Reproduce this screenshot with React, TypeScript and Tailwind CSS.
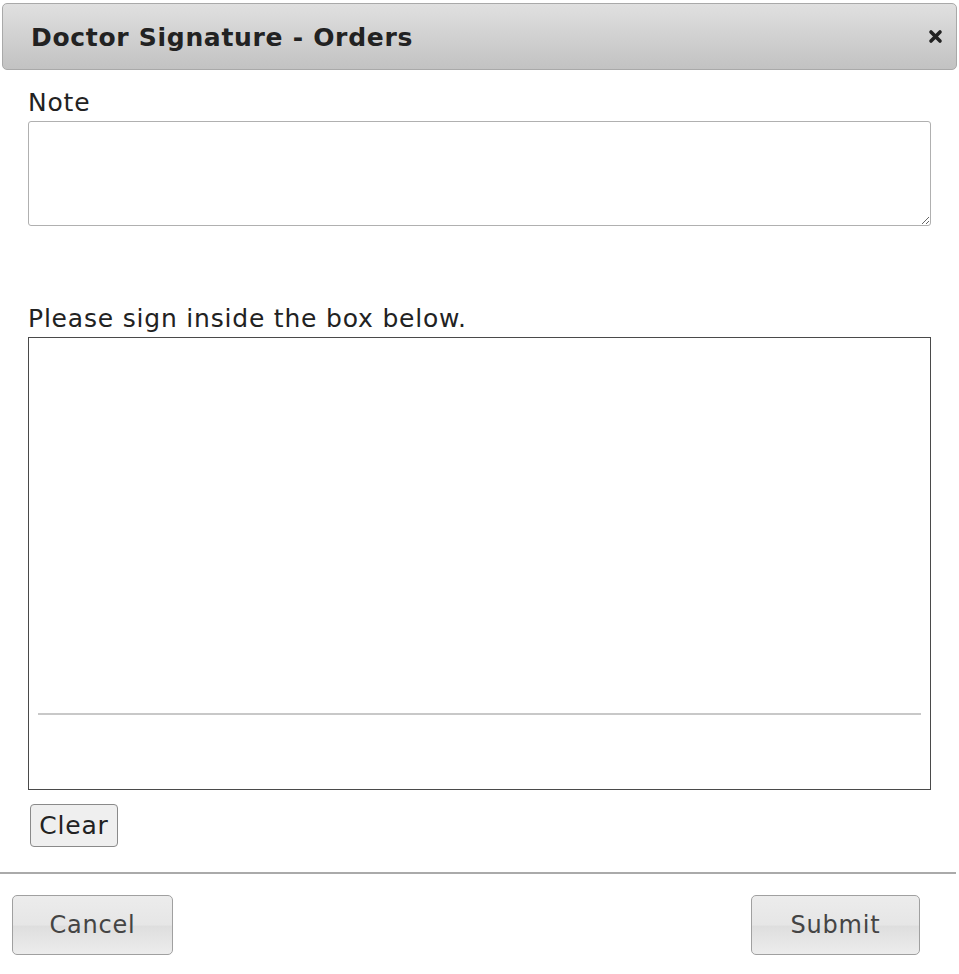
import React from "react";

export default function App() {
  return (
    <div className="w-[959px] h-[974px] bg-white font-['DejaVu_Sans','Verdana',sans-serif] text-[#222] overflow-hidden">
      <div className="mx-[2px] mt-[3px] w-[955px] h-[67px] rounded-[5px] border border-[#a9a9a9] bg-[linear-gradient(to_bottom,#e0e0e0,#c2c2c2)] flex items-center justify-between pl-[28px] pr-[13px]">
        <div className="text-[25px] leading-[30px] font-bold text-[#222] tracking-[0.7px] translate-y-[1px]">Doctor Signature - Orders</div>
        <svg width="15" height="15" viewBox="0 0 15 15">
          <path d="M3 3 L12 12 M12 3 L3 12" stroke="#222" strokeWidth="3.6" strokeLinecap="round" />
        </svg>
      </div>
      <div className="pl-[28px] pr-[28px]">
        <div className="mt-[18px] text-[25px] leading-[30px] tracking-[0.8px] text-[#222]">Note</div>
        <textarea className="mt-[3px] block w-[903px] h-[105px] rounded-[3px] border border-[#b0b0b0] bg-white resize-y outline-none" />
        <div className="mt-[78px] text-[25px] leading-[30px] tracking-[0.8px] text-[#222]">Please sign inside the box below.</div>
        <div className="mt-[3px] w-[903px] h-[453px] border-[1.5px] border-[#4a4a4a] bg-white flex flex-col justify-end px-[9px] pb-[74px]">
          <div className="h-[2.5px] bg-[#c8c8c8]" />
        </div>
        <button className="mt-[14px] ml-[2px] w-[88px] h-[43px] rounded-[4px] border border-[#8a8a8a] bg-[#efefef] text-[25px] tracking-[0.8px] text-[#222] flex items-center justify-center">Clear</button>
      </div>
      <div className="mt-[25px] w-[956px] h-[1.5px] bg-[#aaa]" />
      <div className="flex justify-between pl-[12px] pr-[39px] mt-[21px]">
        <button className="w-[161px] h-[60px] rounded-[5px] border border-[#a0a0a0] bg-[linear-gradient(to_bottom,#ececec_0%,#e6e6e6_50%,#dedede_52%,#ececec_100%)] text-[24px] tracking-[0.8px] text-[#444] flex items-center justify-center">Cancel</button>
        <button className="w-[169px] h-[60px] rounded-[5px] border border-[#a0a0a0] bg-[linear-gradient(to_bottom,#ececec_0%,#e6e6e6_50%,#dedede_52%,#ececec_100%)] text-[24px] tracking-[0.8px] text-[#444] flex items-center justify-center">Submit</button>
      </div>
    </div>
  );
}
